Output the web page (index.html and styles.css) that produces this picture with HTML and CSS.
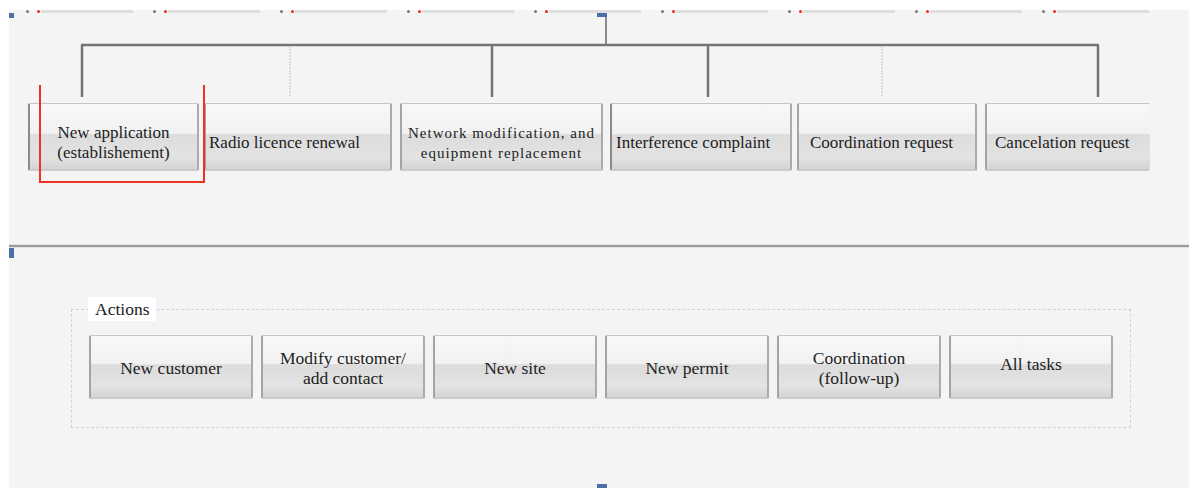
FILE: index.html
```html
<!DOCTYPE html>
<html lang="en">
  <head>
    <meta charset="UTF-8" />
    <meta name="viewport" content="width=device-width, initial-scale=1.0" />
    <title>Workflow</title>
    <link rel="stylesheet" href="styles.css">
  </head>
  <body>
    <div class="canvas">
      <div class="tabs">
        <span class="tab"><i class="tab-dot"></i><i class="tab-pin"></i><i class="tab-line"></i></span>
        <span class="tab"><i class="tab-dot"></i><i class="tab-pin"></i><i class="tab-line"></i></span>
        <span class="tab"><i class="tab-dot"></i><i class="tab-pin"></i><i class="tab-line"></i></span>
        <span class="tab"><i class="tab-dot"></i><i class="tab-pin"></i><i class="tab-line"></i></span>
        <span class="tab"><i class="tab-dot"></i><i class="tab-pin"></i><i class="tab-line"></i></span>
        <span class="tab"><i class="tab-dot"></i><i class="tab-pin"></i><i class="tab-line"></i></span>
        <span class="tab"><i class="tab-dot"></i><i class="tab-pin"></i><i class="tab-line"></i></span>
        <span class="tab"><i class="tab-dot"></i><i class="tab-pin"></i><i class="tab-line"></i></span>
        <span class="tab"><i class="tab-dot"></i><i class="tab-pin"></i><i class="tab-line"></i></span>
      </div>

      <section class="tree">
        <svg class="connectors" width="1180" height="90" viewBox="0 0 1180 90">
          <rect x="0" y="0" width="5" height="5" fill="#4b6ea6" />
          <rect x="588" y="0" width="10" height="4" fill="#4b6ea6" />
          <line x1="597" y1="4" x2="597" y2="32" stroke="#8c8c8c" stroke-width="2" />
          <line x1="72" y1="32" x2="1090" y2="32" stroke="#747474" stroke-width="2.5" />
          <line x1="73" y1="32" x2="73" y2="84" stroke="#747474" stroke-width="2.5" />
          <line x1="281" y1="33" x2="281" y2="84" stroke="#d2d2d2" stroke-width="1.5" stroke-dasharray="2 1" />
          <line x1="483" y1="32" x2="483" y2="84" stroke="#747474" stroke-width="2.5" />
          <line x1="699" y1="32" x2="699" y2="84" stroke="#747474" stroke-width="2.5" />
          <line x1="873" y1="33" x2="873" y2="84" stroke="#d2d2d2" stroke-width="1.5" stroke-dasharray="2 1" />
          <line x1="1089" y1="32" x2="1089" y2="84" stroke="#747474" stroke-width="2.5" />
        </svg>
        <div class="nodes">
          <div class="node">New application<br>(establishement)</div>
          <div class="node node-left">Radio licence renewal</div>
          <div class="node node-small">Network modification, and<br>equipment replacement</div>
          <div class="node node-left">Interference complaint</div>
          <div class="node node-left">Coordination request</div>
          <div class="node node-left">Cancelation request</div>
        </div>
        <div class="focus"></div>
      </section>

      <div class="divider"></div>
      <span class="handle handle-left"></span>

      <fieldset class="actions">
        <legend>Actions</legend>
        <div class="action-row">
          <button class="action">New customer</button>
          <button class="action">Modify customer/<br>add contact</button>
          <button class="action">New site</button>
          <button class="action">New permit</button>
          <button class="action">Coordination<br>(follow-up)</button>
          <button class="action action-up">All tasks</button>
        </div>
      </fieldset>

      <span class="handle handle-bottom"></span>
    </div>
  </body>
</html>
```

FILE: styles.css
```css
body {
  margin: 0;
  background-color: #fff;
  font-family: "Liberation Serif", "Times New Roman", serif;
  color: #222;
}

.canvas {
  margin-left: 9px;
  height: 488px;
  overflow: hidden;
  background: linear-gradient(#fff 10px, #f4f4f4 10px);
}

/* top tab markers */
.tabs {
  display: flex;
  align-items: flex-end;
  gap: 20px;
  height: 13px;
  padding-left: 17px;
}

.tab {
  display: flex;
  align-items: center;
  width: 107px;
  height: 3px;
}

.tab i {
  display: block;
  height: 3px;
}

.tab-dot {
  width: 3px;
  background-color: #7a7a7a;
  border-radius: 50%;
}

.tab-pin {
  width: 3px;
  margin-left: 8px;
  background-color: #f02a1a;
  border-radius: 50%;
}

.tab-line {
  flex: 1;
  margin-left: 1px;
  background-color: #dedede;
}

/* tree */
.tree {
  position: relative;
}

.connectors {
  display: block;
}

.nodes {
  display: flex;
  padding-left: 19px;
}

.node,
.action {
  box-sizing: border-box;
  display: flex;
  align-items: center;
  justify-content: center;
  text-align: center;
  font-family: "Liberation Serif", "Times New Roman", serif;
  font-size: 17px;
  line-height: 20px;
  color: #222;
  background: linear-gradient(
    to bottom,
    #f8f8f8 0%,
    #f1f1f1 46%,
    #dcdcdc 47%,
    #e3e3e3 82%,
    #d4d4d4 100%
  );
  border: 1px solid #c6c6c6;
  border-left: 2px solid #a4a4a4;
  border-right: 2px solid #ababab;
  border-bottom: 2px solid #cbcbcb;
  border-radius: 2px;
}

.node {
  height: 68px;
  padding: 12px 2px 0;
  white-space: nowrap;
}

.node:nth-child(1) { width: 171px; border-left-color: #8a8a8a; }
.node:nth-child(2) { width: 188px; margin-left: 5px; padding-left: 3px; }
.node:nth-child(3) { width: 203px; margin-left: 8px; }
.node:nth-child(4) { width: 182px; margin-left: 7px; padding-left: 4px; border-left-color: #8a8a8a; }
.node:nth-child(5) { width: 180px; margin-left: 5px; padding-left: 11px; }
.node:nth-child(6) { width: 165px; margin-left: 8px; padding-left: 8px; border-right: none; }

.node-left {
  justify-content: flex-start;
}

.node-small {
  font-size: 15px;
  letter-spacing: 1px;
}

.focus {
  position: absolute;
  left: 30px;
  top: 72px;
  box-sizing: border-box;
  width: 166px;
  height: 98px;
  border: 2px solid #ec3324;
  border-top: none;
}

/* divider */
.divider {
  margin-top: 74px;
  height: 2px;
  background-color: #9c9c9c;
  box-shadow: 0 -1px 0 #e2e2e2, 0 1px 0 #e2e2e2;
}

.handle {
  display: block;
  background-color: #4b6ea6;
}

.handle-left {
  width: 5px;
  height: 10px;
  margin-top: 1px;
}

.handle-bottom {
  width: 10px;
  height: 4px;
  margin: 56px 0 0 588px;
}

/* actions */
.actions {
  box-sizing: border-box;
  width: 1052px;
  margin: 39px 0 0 62px;
  padding: 14px 17px 28px;
  border: 1px dashed #c9d5e3;
}

.actions legend {
  padding: 0 7px;
  margin-left: -1px;
  background-color: #fff;
  font-size: 17.5px;
  line-height: 24px;
}

.action-row {
  display: flex;
  gap: 8px;
}

.action {
  width: 164px;
  height: 64px;
  padding: 2px 4px 0;
  font-size: 17.5px;
  cursor: pointer;
}

.action-up {
  padding: 0 4px 6px;
}
```
